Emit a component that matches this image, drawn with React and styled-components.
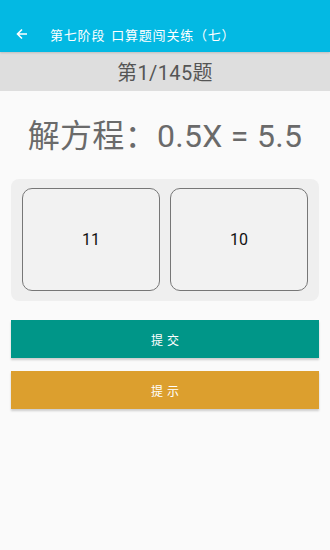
import React from "react";
import styled, { createGlobalStyle } from "styled-components";

const Global = createGlobalStyle`
  html, body { margin: 0; padding: 0; background: #fafafa; }
  body { font-family: Roboto, "Noto Sans CJK SC", sans-serif; }
`;

const Page = styled.div`
  width: 330px;
  height: 550px;
  background: #fafafa;
  display: flex;
  flex-direction: column;
`;

const Toolbar = styled.div`
  height: 52px;
  background: #03b9e3;
  display: flex;
  align-items: center;
  padding-top: 16px;
  box-sizing: border-box;
  color: #fff;
  box-shadow: 0 1px 2px rgba(0,0,0,0.15);
  position: relative;
  z-index: 1;
`;

const Back = styled.div`
  width: 50px;
  display: flex;
  justify-content: center;
  padding-right: 6px;
  box-sizing: border-box;
`;

const Title = styled.div`
  font-size: 13px;
  letter-spacing: 0.8px;
  word-spacing: 2px;
`;

const Counter = styled.div`
  height: 39px;
  background: #dedede;
  display: flex;
  align-items: center;
  justify-content: center;
  font-size: 20px;
  letter-spacing: 0.4px;
  color: #555;
`;

const Question = styled.div`
  text-align: center;
  font-size: 32px;
  letter-spacing: 0.3px;
  color: #6a6a6a;
  margin-top: 24px;
  height: 42px;
  line-height: 42px;
`;

const Options = styled.div`
  margin: 22px 11px 0;
  background: #efefef;
  border-radius: 8px;
  padding: 9px 11px 10px;
  display: grid;
  grid-template-columns: 1fr 1fr;
  gap: 10px;
`;

const Option = styled.div`
  height: 103px;
  box-sizing: border-box;
  border: 1px solid #777;
  border-radius: 10px;
  background: #f2f2f2;
  display: flex;
  align-items: center;
  justify-content: center;
  font-size: 16px;
  color: #111;
`;

const Action = styled.div`
  margin: ${p => p.$top}px 11px 0;
  height: 38px;
  background: ${p => p.$bg};
  color: #fff;
  display: flex;
  align-items: center;
  justify-content: center;
  font-size: 12px;
  letter-spacing: 4px;
  padding-left: 4px;
  box-shadow: 0 2px 2px rgba(0,0,0,0.18);
`;

export default function App() {
  return (
    <Page>
      <Global />
      <Toolbar>
        <Back>
          <svg width="12" height="12" viewBox="0 0 12 12" fill="none" stroke="#fff" strokeWidth="1.6">
            <path d="M11 6H1.5M6 1.5L1.5 6L6 10.5" />
          </svg>
        </Back>
        <Title>第七阶段 口算题闯关练（七）</Title>
      </Toolbar>
      <Counter>第1/145题</Counter>
      <Question>解方程：0.5X = 5.5</Question>
      <Options>
        <Option>11</Option>
        <Option>10</Option>
      </Options>
      <Action $top={19} $bg="#009688">提交</Action>
      <Action $top={13} $bg="#dc9f2e">提示</Action>
    </Page>
  );
}
